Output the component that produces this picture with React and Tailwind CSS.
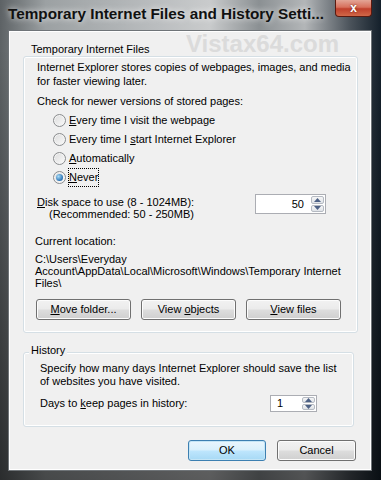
import React from 'react';

const U = ({ children }) => <span className="underline">{children}</span>;

const Radio = ({ checked, children }) => (
  <div className="flex items-center h-[19px]">
    <span className="w-[13px] h-[13px] rounded-full border border-[#8a8c8e] bg-[linear-gradient(135deg,#dcdcdc,#fafafa)] flex items-center justify-center shadow-[inset_0_0_0_1px_#f4f4f4]">
      {checked && (
        <span className="w-[7px] h-[7px] rounded-full bg-[radial-gradient(circle_at_35%_35%,#a9dcf7,#2a73b5_70%,#1a4f86)]" />
      )}
    </span>
    <span className={checked ? 'ml-[3px] outline-1 outline-dotted outline-black' : 'ml-[3px]'}>{children}</span>
  </div>
);

const Arrow = ({ up }) => (
  <svg width="7" height="4" viewBox="0 0 7 4">
    {up ? <path d="M0 4 L3.5 0 L7 4 Z" fill="#4d6185" /> : <path d="M0 0 L3.5 4 L7 0 Z" fill="#4d6185" />}
  </svg>
);

const Spin = ({ value, className, right }) => (
  <div className={`flex border border-[#abadb3] bg-white ${className}`}>
    <div className={right ? 'flex-1 flex items-center justify-end pr-[6px]' : 'flex-1 flex items-center pl-[6px]'}>{value}</div>
    <div className="w-[15px] flex flex-col p-[1px] gap-[1px]">
      <div className="flex-1 flex items-center justify-center border border-[#b5bac2] rounded-[2px] bg-[linear-gradient(#f6f6f6,#dfe3e8)]">
        <Arrow up />
      </div>
      <div className="flex-1 flex items-center justify-center border border-[#b5bac2] rounded-[2px] bg-[linear-gradient(#f6f6f6,#dfe3e8)]">
        <Arrow />
      </div>
    </div>
  </div>
);

const Btn = ({ children, className = 'w-[95px]', primary }) => (
  <div
    className={`h-[21px] ${className} flex items-center justify-center rounded-[3px] border ${
      primary
        ? 'border-[#3c7fb1] bg-[linear-gradient(to_bottom,#eaf6fd_0%,#d9f0fc_48%,#bee6fd_52%,#a7d9f5_100%)] shadow-[inset_0_0_0_1px_#c4e5f6]'
        : 'border-[#707070] bg-[linear-gradient(to_bottom,#f2f2f2_0%,#ebebeb_48%,#dddddd_52%,#cfcfcf_100%)] shadow-[inset_0_0_0_1px_#fcfcfc]'
    }`}
  >
    <span>{children}</span>
  </div>
);

const GroupBox = ({ label, labelClass = 'top-[-10px]', className, children }) => (
  <div className={`relative border border-[#d5dfe5] rounded-[3px] shadow-[inset_0_0_0_1px_#ffffff] ${className}`}>
    <span className={`absolute left-[5px] ${labelClass} px-[2px] leading-[14px] bg-[#f0f0f0]`}>{label}</span>
    {children}
  </div>
);

export default function App() {
  return (
    <div className="relative w-[381px] h-[480px] flex flex-col overflow-hidden font-['Liberation_Sans',Arial,sans-serif] text-[11px] text-black bg-[linear-gradient(to_bottom,rgba(0,0,0,0)_0%,rgba(0,0,0,0)_10%,rgba(0,0,0,0.55)_100%),linear-gradient(90deg,#5d6265_0%,#9ca1a3_12%,#b9bcbe_40%,#c9cbcc_55%,#8b9093_68%,#b3b6b8_80%,#4a525a_92%,#14202b_100%)]">
      {/* title bar */}
      <div className="h-[30px] shrink-0 flex items-start pl-[8px] pt-[6px]">
        <span className="font-bold text-[15.3px] leading-[16px] text-[#111] [text-shadow:0_0_6px_rgba(255,255,255,0.9)]">
          Temporary Internet Files and History Setti...
        </span>
        <div className="absolute right-[9px] top-0 w-[37px] h-[17px] rounded-b-[4px] border border-t-0 border-[#5a1a10] bg-[linear-gradient(to_bottom,#e3a596_0%,#d7705c_45%,#c0402c_55%,#d06848_100%)] flex items-center justify-center">
          <span className="text-white font-bold text-[12px] leading-[12px] [text-shadow:0_0_2px_#5a1a10]">x</span>
        </div>
      </div>

      {/* client area */}
      <div className="flex-1 ml-[8px] mr-[9px] mb-[9px] bg-[#f0f0f0] border border-[#6f7478] shadow-[inset_0_0_0_1px_#ffffff] flex flex-col">
        <GroupBox
          label="Temporary Internet Files"
          labelClass="top-[-15px]"
          className="ml-[14px] mr-[13px] mt-[25px] pl-[13px] pt-[3px] pb-[12px]"
        >
          <p className="leading-[14px]">
            Internet Explorer stores copies of webpages, images, and media
            <br />
            for faster viewing later.
          </p>
          <p className="leading-[14px] mt-[6px]">Check for newer versions of stored pages:</p>
          <div className="mt-[3px] ml-[16px] flex flex-col">
            <Radio>
              <U>E</U>very time I visit the webpage
            </Radio>
            <Radio>
              Every time I <U>s</U>tart Internet Explorer
            </Radio>
            <Radio>
              <U>A</U>utomatically
            </Radio>
            <Radio checked>
              <U>N</U>ever
            </Radio>
          </div>
          <div className="mt-[9px] flex items-start">
            <div className="leading-[12px]">
              <div>
                <U>D</U>isk space to use (8 - 1024MB):
              </div>
              <div className="pl-[12px]">(Recommended: 50 - 250MB)</div>
            </div>
            <Spin value="50" right className="ml-auto mr-[31px] mt-[-2px] w-[71px] h-[20px]" />
          </div>
          <p className="leading-[12px] mt-[15px] ml-[-2px]">Current location:</p>
          <p className="leading-[12px] mt-[6px] ml-[-2px]">
            C:\Users\Everyday
            <br />
            Account\AppData\Local\Microsoft\Windows\Temporary Internet
            <br />
            Files\
          </p>
          <div className="mt-[10px] ml-[-1px] flex gap-[10px]">
            <Btn>
              <U>M</U>ove folder...
            </Btn>
            <Btn>
              View <U>o</U>bjects
            </Btn>
            <Btn>
              <U>V</U>iew files
            </Btn>
          </div>
        </GroupBox>

        <GroupBox label="History" className="ml-[14px] mr-[17px] mt-[19px] pl-[16px] pt-[9px] pb-[14px]">
          <p className="leading-[13px]">
            Specify how many days Internet Explorer should save the list
            <br />
            of websites you have visited.
          </p>
          <div className="mt-[7px] flex items-center">
            <span className="leading-[13px]">
              Days to <U>k</U>eep pages in history:
            </span>
            <Spin value="1" className="ml-auto mr-[36px] w-[47px] h-[17px]" />
          </div>
        </GroupBox>

        <div className="mt-[13px] mr-[15px] flex justify-end gap-[11px]">
          <Btn primary className="w-[78px]">
            OK
          </Btn>
          <Btn className="w-[79px]">Cancel</Btn>
        </div>
      </div>

      {/* watermark */}
      <div className="absolute left-[186px] top-[32px] pointer-events-none font-bold text-[24px] leading-[24px] text-[#d6d6d6] opacity-80">
        Vistax64.com
      </div>
    </div>
  );
}
